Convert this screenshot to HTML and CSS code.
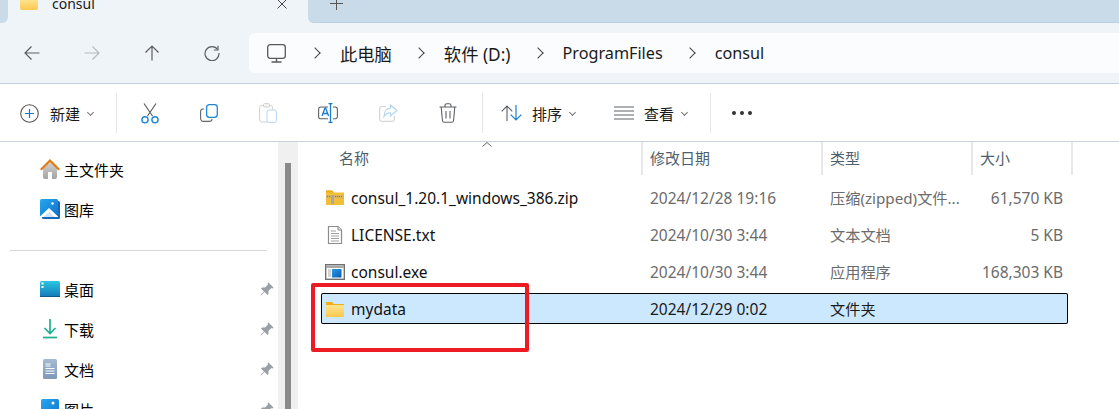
FILE: index.html
```html
<!DOCTYPE html>
<html lang="zh">
<head>
<meta charset="utf-8">
<title>consul</title>
<link rel="stylesheet" href="styles.css">
</head>
<body>
<svg class="defs" width="0" height="0">
  <defs>
    <linearGradient id="folderBody" x1="0" y1="0" x2="0" y2="1"><stop offset="0" stop-color="#ffe58f"/><stop offset="1" stop-color="#fbc84f"/></linearGradient>
    <linearGradient id="homeBody" x1="0" y1="0" x2="0" y2="1"><stop offset="0" stop-color="#d2d2d2"/><stop offset="1" stop-color="#a4a4a4"/></linearGradient>
    <linearGradient id="blueTile" x1="0" y1="0" x2="1" y2="1"><stop offset="0" stop-color="#27a7ee"/><stop offset="1" stop-color="#1172cc"/></linearGradient>
    <linearGradient id="deskTile" x1="0" y1="0" x2="0" y2="1"><stop offset="0" stop-color="#2bc6e2"/><stop offset="1" stop-color="#1479b8"/></linearGradient>
    <linearGradient id="docTile" x1="0" y1="0" x2="0" y2="1"><stop offset="0" stop-color="#a6bad2"/><stop offset="1" stop-color="#7d97b8"/></linearGradient>
    <linearGradient id="exeTile" x1="0" y1="0" x2="1" y2="1"><stop offset="0" stop-color="#2a9be8"/><stop offset="1" stop-color="#0a5cb0"/></linearGradient>
  </defs>
</svg>
<div class="window">
  <div class="tabstrip">
    <div class="tab-gap"></div>
    <div class="tab">
      <svg class="tab-folder" width="18" height="11" viewBox="0 0 18 11"><path d="M0 0h18v9a2 2 0 0 1-2 2H2a2 2 0 0 1-2-2z" fill="url(#folderBody)"/></svg>
      <span class="tab-title">consul</span>
      <svg class="tab-close" width="10" height="10" viewBox="0 0 10 10"><path d="M.5 .5l9 9M9.500 .5l-9 9" stroke="#444" fill="none"/></svg>
    </div>
    <div class="tab-rest">
      <svg width="13" height="13" viewBox="0 0 13 13"><path d="M6.500 0v13M0 6.500h13" stroke="#555" fill="none"/></svg>
    </div>
  </div>
  <div class="navbar">
    <div class="nav-buttons">
      <svg class="nav-icon" viewBox="0 0 16 16"><path d="M15.500 8H1M7.500 1.500 1 8l6.500 6.500" stroke="#5b5f63" stroke-width="1.200" fill="none"/></svg>
      <svg class="nav-icon" viewBox="0 0 16 16"><path d="M.5 8H15M8.500 1.500 15 8l-6.500 6.500" stroke="#b6babd" stroke-width="1.200" fill="none"/></svg>
      <svg class="nav-icon" viewBox="0 0 16 16"><path d="M8 15.500V1M1.500 7.500 8 1l6.500 6.500" stroke="#5b5f63" stroke-width="1.200" fill="none"/></svg>
      <svg class="nav-icon" viewBox="0 0 16 16"><path d="M13.700 4.500A7 7 0 1 0 15 8" stroke="#5b5f63" stroke-width="1.200" fill="none"/><path d="M14 .8v4.200H9.800" stroke="#5b5f63" stroke-width="1.200" fill="none"/></svg>
    </div>
    <div class="address">
      <svg class="pc-icon" width="19" height="19" viewBox="0 0 19 19"><rect x=".7" y=".7" width="17.600" height="13.600" rx="2.500" stroke="#55595d" stroke-width="1.300" fill="none"/><path d="M9.500 14.500v3M4.500 18h10" stroke="#55595d" stroke-width="1.300" fill="none"/></svg>
      <span class="crumb-sep"></span><span class="crumb crumb-cjk">此电脑</span>
      <span class="crumb-sep"></span><span class="crumb crumb-cjk">软件 (D:)</span>
      <span class="crumb-sep"></span><span class="crumb">ProgramFiles</span>
      <span class="crumb-sep"></span><span class="crumb">consul</span>
    </div>
  </div>
  <div class="toolbar">
    <div class="tool-new">
      <svg width="19" height="19" viewBox="0 0 19 19"><circle cx="9.500" cy="9.500" r="8.800" stroke="#555" stroke-width="1.100" fill="none"/><path d="M9.500 5v9M5 9.500h9" stroke="#0f74d0" stroke-width="1.200" fill="none"/></svg>
      <span class="tool-label">新建</span><span class="caret"></span>
    </div>
    <div class="tool-sep"></div>
    <div class="tool-icons">
      <svg width="18" height="21" viewBox="0 0 18 21"><path d="M3 0.500 11.500 13M15 .5 6.500 13" stroke="#555" stroke-width="1.100" fill="none"/><circle cx="4" cy="16.800" r="3.100" stroke="#1f86d8" stroke-width="1.400" fill="none"/><circle cx="14" cy="16.800" r="3.100" stroke="#1f86d8" stroke-width="1.400" fill="none"/></svg>
      <svg width="18" height="18" viewBox="0 0 18 18"><path d="M4 5H3a2.500 2.500 0 0 0-2.400 2.500v7A2.800 2.800 0 0 0 3.500 17.400h6A2.500 2.500 0 0 0 12 15" stroke="#666" stroke-width="1.100" fill="none"/><rect x="6.600" y=".7" width="10.700" height="12.600" rx="2.800" stroke="#1f86d8" stroke-width="1.300" fill="#fff"/></svg>
      <svg width="18" height="20" viewBox="0 0 18 20"><rect x=".6" y="2.500" width="13" height="16.500" rx="2" stroke="#d1d1d1" fill="none"/><rect x="4.500" y=".6" width="6" height="3.500" rx="1" stroke="#d1d1d1" fill="#f4f4f4"/><rect x="8" y="7" width="9.400" height="12.400" rx="1.800" stroke="#b5d5f0" fill="#fff"/></svg>
      <svg width="20" height="20" viewBox="0 0 20 20"><path d="M10 4H3a2.400 2.400 0 0 0-2.400 2.400v7A2.400 2.400 0 0 0 3 15.800h7M15 4h2a2.400 2.400 0 0 1 2.400 2.400v7a2.400 2.400 0 0 1-2.400 2.400h-2" stroke="#5d6064" stroke-width="1.100" fill="none"/><path d="M4 13 7 5h.6l3 8M5 10.500h4.500M12.500 .7v18.600M10.500 .7h4M10.500 19.300h4" stroke="#1a7dd0" stroke-width="1.300" fill="none"/></svg>
      <svg width="19" height="18" viewBox="0 0 19 18"><path d="M7 2.500H3A2.400 2.400 0 0 0 .6 5v10A2.400 2.400 0 0 0 3 17.400h10a2.400 2.400 0 0 0 2.400-2.400v-3" stroke="#d5d5d5" stroke-width="1.200" fill="none"/><path d="M11.500 1 18 6.500 11.500 12V8.800C8.500 8.800 6.500 10 5 12.500 5 8 7.500 4.500 11.500 4.200z" stroke="#b5d5f0" stroke-width="1.200" fill="#fff"/></svg>
      <svg width="18" height="20" viewBox="0 0 18 20"><path d="M.5 4h17M6 4V2.500A1.800 1.800 0 0 1 7.800.7h2.400A1.800 1.800 0 0 1 12 2.500V4M2.200 4l1.200 13.200a2.200 2.200 0 0 0 2.200 2h6.800a2.200 2.200 0 0 0 2.200-2L15.800 4M7 8v7.500M11 8v7.500" stroke="#5d6064" stroke-width="1.100" fill="none"/></svg>
    </div>
    <div class="tool-sep"></div>
    <div class="tool-sort">
      <svg width="21" height="16" viewBox="0 0 21 16"><path d="M6 16V1M.7 6.300 6 1l5.300 5.300" stroke="#5d6064" stroke-width="1.100" fill="none"/><path d="M15 0v15M9.700 9.700 15 15l5.300-5.300" stroke="#1a7dd0" stroke-width="1.200" fill="none"/></svg>
      <span class="tool-label">排序</span><span class="caret"></span>
    </div>
    <div class="tool-view">
      <svg width="20" height="14" viewBox="0 0 20 14"><path d="M0 1h20M0 5h20M0 9h20M0 13h20" stroke="#5d6064" fill="none"/></svg>
      <span class="tool-label">查看</span><span class="caret"></span>
    </div>
    <div class="tool-sep"></div>
    <div class="tool-more"><i></i><i></i><i></i></div>
  </div>
  <div class="main">
    <aside class="sidebar">
      <ul class="side-group">
        <li class="side-item">
          <svg class="side-icon" viewBox="0 0 20 20"><path d="M3 9v9a2 2 0 0 0 2 2H8v-7h4v7h3a2 2 0 0 0 2-2V9L10 2.500z" fill="url(#homeBody)"/><path d="M0 10 10 0l10 10-1.500 1.500L10 3 1.500 11.500z" fill="#e5790f"/></svg>
          <span>主文件夹</span>
        </li>
        <li class="side-item">
          <svg class="side-icon" viewBox="0 0 20 20"><path d="M18 2h.5A1.500 1.500 0 0 1 20 3.500v15a1.500 1.500 0 0 1-1.500 1.500h-15A1.500 1.500 0 0 1 2 18.500V18z" fill="#1766bb"/><rect width="18" height="18" rx="1.500" fill="url(#blueTile)"/><path d="M0 17.500 9 9l9 8.500V18H0z" fill="#fff"/><path d="M3.500 18 9 13l5.500 5z" fill="#cfe4f6"/><circle cx="12.500" cy="4.500" r="1.200" fill="#fff"/></svg>
          <span>图库</span>
        </li>
      </ul>
      <div class="side-divider"></div>
      <ul class="side-group">
        <li class="side-item">
          <svg class="side-icon" viewBox="0 0 20 20"><rect y="2" width="20" height="16" rx="1.500" fill="url(#deskTile)"/><path d="M1.500 3.500h2v2h-2zM1.500 7h2v2h-2z" fill="#fff"/><path d="M0 17h20v1H0z" fill="#0d5a88"/></svg>
          <span>桌面</span>
          <svg class="pin" viewBox="0 0 14 14"><path d="M8.500 .5 13.500 5.500 12.500 6.500 11.500 6 8.500 9 8.500 12 7.500 13 4.500 10 1 13.500 .5 13 4 9.500 1 6.500 2 5.500H5L8 2.500 7.500 1.500z" fill="#9aa0a6"/></svg>
        </li>
        <li class="side-item">
          <svg class="side-icon" viewBox="0 0 20 20"><path d="M10 0v14M4.500 9 10 14.500 15.500 9" stroke="#1eb08f" stroke-width="1.700" fill="none"/><path d="M3 18.500h14" stroke="#1eb08f" stroke-width="1.700" fill="none"/></svg>
          <span>下载</span>
          <svg class="pin" viewBox="0 0 14 14"><path d="M8.500 .5 13.500 5.500 12.500 6.500 11.500 6 8.500 9 8.500 12 7.500 13 4.500 10 1 13.500 .5 13 4 9.500 1 6.500 2 5.500H5L8 2.500 7.500 1.500z" fill="#9aa0a6"/></svg>
        </li>
        <li class="side-item">
          <svg class="side-icon" viewBox="0 0 20 20"><rect x="3" width="14" height="20" rx="1.500" fill="url(#docTile)"/><path d="M5.500 5h5M5.500 7h5M5.500 9.500h9M5.500 12h9M5.500 14.500h9" stroke="#fff"/></svg>
          <span>文档</span>
          <svg class="pin" viewBox="0 0 14 14"><path d="M8.500 .5 13.500 5.500 12.500 6.500 11.500 6 8.500 9 8.500 12 7.500 13 4.500 10 1 13.500 .5 13 4 9.500 1 6.500 2 5.500H5L8 2.500 7.500 1.500z" fill="#9aa0a6"/></svg>
        </li>
        <li class="side-item">
          <svg class="side-icon" viewBox="0 0 20 20"><rect x="1" width="18" height="20" rx="1.500" fill="url(#blueTile)"/><circle cx="13" cy="4" r="1.500" fill="#fff"/></svg>
          <span>图片</span>
          <svg class="pin" viewBox="0 0 14 14"><path d="M8.500 .5 13.500 5.500 12.500 6.500 11.500 6 8.500 9 8.500 12 7.500 13 4.500 10 1 13.500 .5 13 4 9.500 1 6.500 2 5.500H5L8 2.500 7.500 1.500z" fill="#9aa0a6"/></svg>
        </li>
      </ul>
    </aside>
    <div class="scrollbar"><div class="thumb"></div></div>
    <section class="files">
      <div class="head">
        <div class="hcell hname">名称<svg class="sort-arrow" width="10" height="5" viewBox="0 0 10 5"><path d="M.5 4.500 5 .5l4.500 4" stroke="#666" fill="none"/></svg></div>
        <div class="hcell">修改日期</div>
        <div class="hcell">类型</div>
        <div class="hcell">大小</div>
      </div>
      <div class="rows">
        <div class="row">
          <div class="name"><svg class="file-icon" viewBox="0 0 18 18"><path d="M0 1.500h6l2 2h10V16H0z" fill="#f1bf3a"/><path d="M0 1.500h6l2 2H0z" fill="#f0ad17"/><path d="M0 6h18v3.500H0z" fill="#d8b45c"/><path d="M1 7.500h16" stroke="#7d7d7d" stroke-dasharray="1 1"/><rect x="5" y="6" width="3" height="9" fill="#a8a8a8"/></svg>consul_1.20.1_windows_386.zip</div>
          <div class="cell">2024/12/28 19:16</div>
          <div class="cell type">压缩(zipped)文件...</div>
          <div class="cell size">61,570 KB</div>
        </div>
        <div class="row">
          <div class="name"><svg class="file-icon" viewBox="0 0 18 18"><path d="M2.500 .5h9.500l3.500 3.500v13.500h-13z" fill="#fff" stroke="#8c8c8c" stroke-width="1.200"/><path d="M12 .5V4h3.500" stroke="#8c8c8c" fill="#e8e8e8"/><path d="M5 5h5M5 7.500h8M5 10h8M5 12.500h8M5 15h8" stroke="#a0a0a0"/></svg>LICENSE.txt</div>
          <div class="cell">2024/10/30 3:44</div>
          <div class="cell type">文本文档</div>
          <div class="cell size">5 KB</div>
        </div>
        <div class="row">
          <div class="name"><svg class="file-icon exe" viewBox="0 0 20 16"><rect x=".7" y=".7" width="18.600" height="14.600" fill="#fff" stroke="#707070" stroke-width="1.400"/><path d="M1 1.500h18v2.500H1z" fill="#a8a8a8"/><rect x="7" y="5" width="9.500" height="8.500" fill="url(#exeTile)"/><path d="M3 6h3M3 8h3M3 10h3M3 12h3" stroke="#a8a8a8"/></svg>consul.exe</div>
          <div class="cell">2024/10/30 3:44</div>
          <div class="cell type">应用程序</div>
          <div class="cell size">168,303 KB</div>
        </div>
        <div class="row selected">
          <div class="name"><svg class="file-icon" viewBox="0 0 18 18"><path d="M0 2h6l2 2h10v13H0z" fill="#f2ae1d"/><path d="M0 5h18v11a1 1 0 0 1-1 1H1a1 1 0 0 1-1-1z" fill="url(#folderBody)"/></svg>mydata</div>
          <div class="cell">2024/12/29 0:02</div>
          <div class="cell type">文件夹</div>
          <div class="cell size"></div>
        </div>
      </div>
      <div class="annotation"></div>
    </section>
  </div>
</div>
</body>
</html>
```

FILE: styles.css
```css
* { box-sizing: border-box; }
html, body { margin: 0; height: 100%; }
body {
  font-family: "Noto Sans", "Noto Sans CJK SC", sans-serif;
  font-size: 14px;
  color: #1a1a1a;
  background: #fff;
  overflow: hidden;
}
ul { list-style: none; margin: 0; padding: 0; }
svg { display: block; flex: none; }
.defs { position: absolute; }
.window { display: flex; flex-direction: column; height: 409px; overflow: hidden; }

.tabstrip { display: flex; height: 23px; background: #eff4f9; overflow: hidden; flex: none; }
.tab-gap { width: 8px; border-bottom-right-radius: 6px; background: #c9dbe9; }
.tab { width: 300px; display: flex; align-items: flex-end; padding: 0 0 13px 12px; }
.tab-title { font-size: 14px; line-height: 20px; margin: 0 0 -4px 14px; width: 185px; }
.tab-close { margin: 0 0 1px 40px; }
.tab-rest { flex: 1; background: #c9dbe9; border-radius: 0 0 0 6px; border-bottom: 1px solid #bdd0e0; padding: 0 0 0 22px; display: flex; align-items: flex-end; }
.tab-rest svg { margin-bottom: 12px; }

.navbar { height: 61px; flex: none; background: #eff4f9; border-bottom: 1px solid #c3d0dc; display: flex; align-items: center; padding: 0 0 0 24px; }
.nav-buttons { display: flex; gap: 44px; width: 225px; flex: none; }
.nav-icon { width: 16px; height: 16px; }
.address { flex: 1; height: 40px; background: #fbfcfe; border-radius: 6px 0 0 6px; display: flex; align-items: center; padding-left: 18px; font-size: 16.200px; color: #1a1a1a; }
.pc-icon { margin-right: 25px; }
.crumb-sep { width: 8px; height: 8px; border-top: 1.300px solid #444; border-right: 1.300px solid #444; transform: rotate(45deg); margin-right: 21px; flex: none; }
.crumb { margin-right: 23px; white-space: nowrap; }
.crumb-cjk { font-size: 17.300px; }

.toolbar { height: 58px; flex: none; border-bottom: 1px solid #c8d1dc; display: flex; align-items: center; padding: 1px 0 0 20px; }
.tool-new, .tool-sort, .tool-view { display: flex; align-items: center; }
.tool-label { font-size: 15px; margin-left: 11px; }
.tool-sort .tool-label, .tool-view .tool-label { margin-left: 10px; }
.caret { width: 5px; height: 5px; border-right: 1px solid #777; border-bottom: 1px solid #777; transform: rotate(45deg); margin: -2px 0 0 8px; }
.tool-sep { width: 1px; height: 40px; background: #e6e6e6; flex: none; }
.tool-new { width: 96px; }
.tool-icons { display: flex; align-items: center; gap: 41px; padding: 0 24px 0 24px; width: 365px; }
.tool-sort { width: 131px; padding-left: 18px; }
.tool-view { width: 96px; }
.tool-more { display: flex; gap: 4px; padding-left: 21px; }
.tool-more i { width: 4px; height: 4px; border-radius: 50%; background: #333; }

.main { flex: 1; display: flex; min-height: 0; }
.sidebar { width: 278px; flex: none; overflow: hidden; padding-top: 7px; }
.side-group { display: flex; flex-direction: column; }
.side-item { height: 40px; display: flex; align-items: center; padding-left: 40px; font-size: 15px; color: #000; }
.side-icon { width: 20px; height: 20px; margin-right: 4px; }
.side-item span { flex: 1; }
.pin { width: 14px; height: 14px; margin-right: 4px; }
.side-divider { height: 1px; background: #d5d8dc; margin: 21px 11px 18px 10px; }
.scrollbar { width: 20px; flex: none; background: #f0f0f0; padding: 21px 0 0 7px; }
.thumb { width: 6px; height: 100%; background: #8a8a8a; }

.files { flex: 1; position: relative; padding-left: 23px; }
.head { display: grid; grid-template-columns: 322px 180px 150px 100px; width: 752px; height: 33px; }
.hcell { font-size: 15px; color: #4c5f70; padding: 5px 0 0 7px; border-right: 2px solid #e8e8e8; position: relative; white-space: nowrap; }
.hname { padding-left: 18px; }
.sort-arrow { position: absolute; left: 161px; top: 0; }
.rows { display: flex; flex-direction: column; margin-top: 4px; }
.row { display: grid; grid-template-columns: 322px 180px 150px 95px; width: 747px; height: 37px; align-items: center; }
.row.selected { background: #cce8ff; box-shadow: inset 0 0 0 1px #000; border-radius: 2px; height: 31px; margin-top: 3px; }
.name { display: flex; align-items: center; padding-left: 5px; font-size: 15.500px; color: #111; white-space: nowrap; }
.file-icon { width: 18px; height: 18px; margin-right: 7px; }
.file-icon.exe { width: 20px; margin: 0 6px 0 -1px; }
.cell { font-size: 15.500px; color: #6b6b6b; padding-left: 7px; white-space: nowrap; }
.cell.type { font-size: 15.200px; padding-bottom: 2px; }
.selected .cell { color: #1a1a1a; }
.cell.size { text-align: right; padding: 0 5px 0 0; }
.annotation { position: absolute; left: 13px; top: 141px; width: 218px; height: 69px; border: 4px solid #ed1c24; border-radius: 2px; }
```
